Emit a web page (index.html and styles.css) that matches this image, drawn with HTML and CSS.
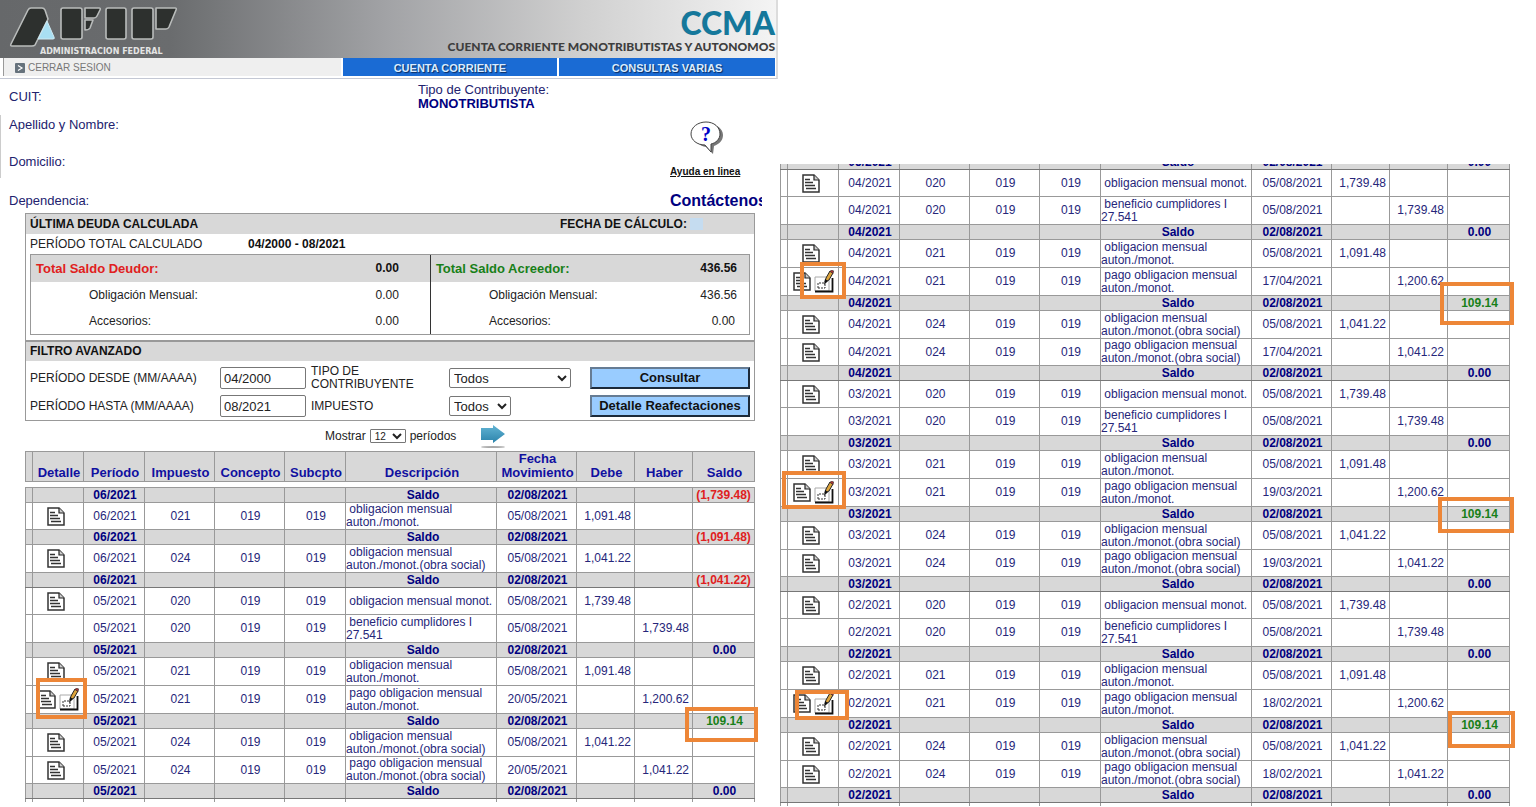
FILE: index.html
```html
<!DOCTYPE html>
<html lang="es">
<head>
<meta charset="utf-8">
<title>CCMA - Cuenta Corriente Monotributistas y Autónomos</title>
<link rel="stylesheet" href="styles.css">
</head>
<body>
<svg class="sprite" aria-hidden="true">
  <symbol id="doc" viewBox="0 0 18 19">
    <path d="M1 1h11l5 5v12H1z" fill="#fff" stroke="#333" stroke-width="1.5"/>
    <path d="M12 1v5h5" fill="#ccc" stroke="#222" stroke-width="1.2"/>
    <path d="M3 5.500h5M3 8.500h8M3 11.500h10M4 14.500h10" stroke="#333" stroke-width="1.3" fill="none"/>
  </symbol>
  <symbol id="edit" viewBox="0 0 20 24">
    <path d="M1 7h14v14H1z" fill="#fff" stroke="#aaa"/>
    <path d="M1 21.500h17.5V8" fill="none" stroke="#111" stroke-width="1.8"/>
    <path d="M4 18v-5h6M4 18h7v-4" fill="none" stroke="#333" stroke-dasharray="2 1"/>
    <path d="M11 12l1-4 4-7 3 2-4 7z" fill="#dda43c" stroke="#222"/>
    <path d="M16 1.500l3 2 .8-2.500L17.500 0z" fill="#a33" stroke="#333" stroke-width=".6"/>
    <path d="M10 15l1-6 3 2z" fill="#111"/>
  </symbol>
</svg>
<div class="page">
<main class="panel">
  <header class="banner">
    <div class="brand">
      <svg class="logo" viewBox="0 0 170 42" role="img" aria-label="AFIP">
        <g fill="#2d302e" stroke="#b9bcbb" stroke-width="1.600" stroke-linejoin="round">
          <path d="M22 2h11q2 0 3 2l3 9-13 26q-1 1-3 1H3q-2 0-1-2L19 4q1-2 3-2z"/>
          <rect x="52" y="2" width="21" height="31" rx="2"/>
          <path d="M76 2h14q2 0 1 2l-3 6q-1 2-3 2h-9z"/>
          <path d="M76 14h8l-3 8q-1 2-5 2z"/>
          <rect x="97" y="2" width="20" height="31" rx="2"/>
          <rect x="123" y="2" width="21" height="31" rx="2"/>
          <path d="M147 2h19q2 0 1 2l-7 17q-1 2-3 2h-10z"/>
        </g>
        <path d="M38 15l-9 18h15q2 0 1-2z" fill="#a9dff2" stroke="#cfe9f2"/>
      </svg>
      <span class="brand-sub">ADMINISTRACION FEDERAL</span>
    </div>
    <div class="titles">
      <h1>CCMA</h1>
      <p>CUENTA CORRIENTE MONOTRIBUTISTAS Y AUTONOMOS</p>
    </div>
  </header>
  <nav class="nav">
    <a class="logout" href="#"><svg viewBox="0 0 10 10" aria-hidden="true"><rect width="10" height="10" rx="1" fill="#66727c"/><path d="M3 2.500l4 2.500-4 2.500" fill="none" stroke="#fff" stroke-width="1.200"/></svg>CERRAR SESION</a>
    <a class="tab" href="#">CUENTA CORRIENTE</a>
    <a class="tab" href="#">CONSULTAS VARIAS</a>
  </nav>
  <section class="info">
    <div class="who">
      <p class="cuit">CUIT:</p>
      <div class="person">
        <p>Apellido y Nombre:</p>
        <p>Domicilio:</p>
      </div>
      <p>Dependencia:</p>
    </div>
    <p class="kind">Tipo de Contribuyente:<br><b>MONOTRIBUTISTA</b></p>
    <div class="help">
      <a class="help-link" href="#">
        <svg viewBox="0 0 34 34" aria-hidden="true">
          <path d="M19 3c8 0 14 5 14 11s-4 9-9 11l-1 8-7-7c-6-1-11-5-11-11S11 3 19 3z" fill="#777"/>
          <path d="M16 1c8 0 14 5 14 12 0 5-4 9-9 10v8l-6-7C7 24 1 19 1 13 1 6 8 1 16 1z" fill="#fff" stroke="#444"/>
          <text x="16" y="20" text-anchor="middle">?</text>
        </svg>
        <span>Ayuda en linea</span>
      </a>
      <a class="contact" href="#">Contáctenos</a>
    </div>
  </section>
  <div class="content">
    <form class="box">
      <div class="bar"><h2>ÚLTIMA DEUDA CALCULADA</h2><h2 class="calc">FECHA DE CÁLCULO:<i></i></h2></div>
      <p class="range">PERÍODO TOTAL CALCULADO<b>04/2000 - 08/2021</b></p>
      <div class="totals">
        <dl>
          <div class="sum debt"><dt>Total Saldo Deudor:</dt><dd>0.00</dd></div>
          <div><dt>Obligación Mensual:</dt><dd>0.00</dd></div>
          <div><dt>Accesorios:</dt><dd>0.00</dd></div>
        </dl>
        <dl>
          <div class="sum credit"><dt>Total Saldo Acreedor:</dt><dd>436.56</dd></div>
          <div><dt>Obligación Mensual:</dt><dd>436.56</dd></div>
          <div><dt>Accesorios:</dt><dd>0.00</dd></div>
        </dl>
      </div>
      <div class="bar filter-bar"><h2>FILTRO AVANZADO</h2></div>
      <div class="filters">
        <label for="desde">PERÍODO DESDE (MM/AAAA)</label>
        <input id="desde" type="text" value="04/2000">
        <label for="tipo">TIPO DE CONTRIBUYENTE</label>
        <select id="tipo" class="wide"><option>Todos</option></select>
        <button type="button">Consultar</button>
        <label for="hasta">PERÍODO HASTA (MM/AAAA)</label>
        <input id="hasta" type="text" value="08/2021">
        <label for="impuesto">IMPUESTO</label>
        <select id="impuesto"><option>Todos</option></select>
        <button type="button">Detalle Reafectaciones</button>
      </div>
    </form>
    <div class="pager">
      <label for="cant">Mostrar</label>
      <select id="cant"><option>12</option></select>
      <span>períodos</span>
      <a href="#" aria-label="Siguiente"><svg viewBox="0 0 26 24" aria-hidden="true">
        <defs><linearGradient id="sky" x1="0" y1="0" x2="0" y2="1"><stop offset="0" stop-color="#62b4d4"/><stop offset="1" stop-color="#2c83ab"/></linearGradient></defs>
        <path d="M1 4h12V1l12 9-12 9v-3H1z" fill="url(#sky)"/>
        <ellipse cx="13" cy="23" rx="12" ry="1" fill="#aaa"/>
      </svg></a>
    </div>
    <table class="moves">
      <colgroup><col class="c-edge"><col class="c-icon"><col class="c-per"><col class="c-imp"><col class="c-con"><col class="c-sub"><col class="c-des"><col class="c-fec"><col class="c-deb"><col class="c-hab"><col class="c-sal"></colgroup>
      <thead>
        <tr><th><th>Detalle<th>Período<th>Impuesto<th>Concepto<th>Subcpto<th>Descripción<th>Fecha Movimiento<th>Debe<th>Haber<th>Saldo</tr>
      </thead>
      <tbody>
        <tr class="gap"><td colspan="11"></tr>
        <tr class="total"><td><td><td>06/2021<td><td><td><td>Saldo<td>02/08/2021<td><td><td class="neg">(1,739.48)</tr>
        <tr class="short"><td><td><svg class="ic"><use href="#doc"/></svg><td>06/2021<td>021<td>019<td>019<td>&nbsp;obligacion mensual<br>auton./monot.<td>05/08/2021<td>1,091.48<td><td></tr>
        <tr class="total"><td><td><td>06/2021<td><td><td><td>Saldo<td>02/08/2021<td><td><td class="neg">(1,091.48)</tr>
        <tr><td><td><svg class="ic"><use href="#doc"/></svg><td>06/2021<td>024<td>019<td>019<td>&nbsp;obligacion mensual<br>auton./monot.(obra social)<td>05/08/2021<td>1,041.22<td><td></tr>
        <tr class="total last"><td><td><td>06/2021<td><td><td><td>Saldo<td>02/08/2021<td><td><td class="neg">(1,041.22)</tr>
        <tr class="short"><td><td><svg class="ic"><use href="#doc"/></svg><td>05/2021<td>020<td>019<td>019<td>&nbsp;obligacion mensual monot.<td>05/08/2021<td>1,739.48<td><td></tr>
        <tr><td><td><td>05/2021<td>020<td>019<td>019<td>&nbsp;beneficio cumplidores I<br>27.541<td>05/08/2021<td><td>1,739.48<td></tr>
        <tr class="total"><td><td><td>05/2021<td><td><td><td>Saldo<td>02/08/2021<td><td><td>0.00</tr>
        <tr><td><td><svg class="ic"><use href="#doc"/></svg><td>05/2021<td>021<td>019<td>019<td>&nbsp;obligacion mensual<br>auton./monot.<td>05/08/2021<td>1,091.48<td><td></tr>
        <tr><td><td class="pair"><svg class="ic"><use href="#doc"/></svg><svg class="ed"><use href="#edit"/></svg><span class="mark i1"></span><td>05/2021<td>021<td>019<td>019<td>&nbsp;pago obligacion mensual<br>auton./monot.<td>20/05/2021<td><td>1,200.62<td></tr>
        <tr class="total"><td><td><td>05/2021<td><td><td><td>Saldo<td>02/08/2021<td><td><td class="pos">109.14<span class="mark v1"></span></tr>
        <tr><td><td><svg class="ic"><use href="#doc"/></svg><td>05/2021<td>024<td>019<td>019<td>&nbsp;obligacion mensual<br>auton./monot.(obra social)<td>05/08/2021<td>1,041.22<td><td></tr>
        <tr class="short"><td><td><svg class="ic"><use href="#doc"/></svg><td>05/2021<td>024<td>019<td>019<td>&nbsp;pago obligacion mensual<br>auton./monot.(obra social)<td>20/05/2021<td><td>1,041.22<td></tr>
        <tr class="total last"><td><td><td>05/2021<td><td><td><td>Saldo<td>02/08/2021<td><td><td>0.00</tr>
        <tr class="tail"><td><td><td><td><td><td><td><td><td><td><td></tr>
      </tbody>
    </table>
  </div>
</main>
<section class="more" aria-label="Movimientos anteriores">
    <table class="moves">
      <colgroup><col class="c-edge"><col class="c-icon"><col class="c-per"><col class="c-imp"><col class="c-con"><col class="c-sub"><col class="c-des"><col class="c-fec"><col class="c-deb"><col class="c-hab"><col class="c-sal"></colgroup>
      <tbody>
        <tr class="total last"><td><td><td>05/2021<td><td><td><td>Saldo<td>02/08/2021<td><td><td>0.00</tr>
        <tr class="short"><td><td><svg class="ic"><use href="#doc"/></svg><td>04/2021<td>020<td>019<td>019<td>&nbsp;obligacion mensual monot.<td>05/08/2021<td>1,739.48<td><td></tr>
        <tr><td><td><td>04/2021<td>020<td>019<td>019<td>&nbsp;beneficio cumplidores I<br>27.541<td>05/08/2021<td><td>1,739.48<td></tr>
        <tr class="total"><td><td><td>04/2021<td><td><td><td>Saldo<td>02/08/2021<td><td><td>0.00</tr>
        <tr><td><td><svg class="ic"><use href="#doc"/></svg><td>04/2021<td>021<td>019<td>019<td>&nbsp;obligacion mensual<br>auton./monot.<td>05/08/2021<td>1,091.48<td><td></tr>
        <tr><td><td class="pair"><svg class="ic"><use href="#doc"/></svg><svg class="ed"><use href="#edit"/></svg><span class="mark i2"></span><td>04/2021<td>021<td>019<td>019<td>&nbsp;pago obligacion mensual<br>auton./monot.<td>17/04/2021<td><td>1,200.62<td></tr>
        <tr class="total"><td><td><td>04/2021<td><td><td><td>Saldo<td>02/08/2021<td><td><td class="pos">109.14<span class="mark v2"></span></tr>
        <tr><td><td><svg class="ic"><use href="#doc"/></svg><td>04/2021<td>024<td>019<td>019<td>&nbsp;obligacion mensual<br>auton./monot.(obra social)<td>05/08/2021<td>1,041.22<td><td></tr>
        <tr class="short"><td><td><svg class="ic"><use href="#doc"/></svg><td>04/2021<td>024<td>019<td>019<td>&nbsp;pago obligacion mensual<br>auton./monot.(obra social)<td>17/04/2021<td><td>1,041.22<td></tr>
        <tr class="total last"><td><td><td>04/2021<td><td><td><td>Saldo<td>02/08/2021<td><td><td>0.00</tr>
        <tr class="short"><td><td><svg class="ic"><use href="#doc"/></svg><td>03/2021<td>020<td>019<td>019<td>&nbsp;obligacion mensual monot.<td>05/08/2021<td>1,739.48<td><td></tr>
        <tr><td><td><td>03/2021<td>020<td>019<td>019<td>&nbsp;beneficio cumplidores I<br>27.541<td>05/08/2021<td><td>1,739.48<td></tr>
        <tr class="total"><td><td><td>03/2021<td><td><td><td>Saldo<td>02/08/2021<td><td><td>0.00</tr>
        <tr><td><td><svg class="ic"><use href="#doc"/></svg><td>03/2021<td>021<td>019<td>019<td>&nbsp;obligacion mensual<br>auton./monot.<td>05/08/2021<td>1,091.48<td><td></tr>
        <tr><td><td class="pair"><svg class="ic"><use href="#doc"/></svg><svg class="ed"><use href="#edit"/></svg><span class="mark i3"></span><td>03/2021<td>021<td>019<td>019<td>&nbsp;pago obligacion mensual<br>auton./monot.<td>19/03/2021<td><td>1,200.62<td></tr>
        <tr class="total"><td><td><td>03/2021<td><td><td><td>Saldo<td>02/08/2021<td><td><td class="pos">109.14<span class="mark v3"></span></tr>
        <tr><td><td><svg class="ic"><use href="#doc"/></svg><td>03/2021<td>024<td>019<td>019<td>&nbsp;obligacion mensual<br>auton./monot.(obra social)<td>05/08/2021<td>1,041.22<td><td></tr>
        <tr class="short"><td><td><svg class="ic"><use href="#doc"/></svg><td>03/2021<td>024<td>019<td>019<td>&nbsp;pago obligacion mensual<br>auton./monot.(obra social)<td>19/03/2021<td><td>1,041.22<td></tr>
        <tr class="total last"><td><td><td>03/2021<td><td><td><td>Saldo<td>02/08/2021<td><td><td>0.00</tr>
        <tr class="short"><td><td><svg class="ic"><use href="#doc"/></svg><td>02/2021<td>020<td>019<td>019<td>&nbsp;obligacion mensual monot.<td>05/08/2021<td>1,739.48<td><td></tr>
        <tr><td><td><td>02/2021<td>020<td>019<td>019<td>&nbsp;beneficio cumplidores I<br>27.541<td>05/08/2021<td><td>1,739.48<td></tr>
        <tr class="total"><td><td><td>02/2021<td><td><td><td>Saldo<td>02/08/2021<td><td><td>0.00</tr>
        <tr><td><td><svg class="ic"><use href="#doc"/></svg><td>02/2021<td>021<td>019<td>019<td>&nbsp;obligacion mensual<br>auton./monot.<td>05/08/2021<td>1,091.48<td><td></tr>
        <tr><td><td class="pair"><svg class="ic"><use href="#doc"/></svg><svg class="ed"><use href="#edit"/></svg><span class="mark i4"></span><td>02/2021<td>021<td>019<td>019<td>&nbsp;pago obligacion mensual<br>auton./monot.<td>18/02/2021<td><td>1,200.62<td></tr>
        <tr class="total"><td><td><td>02/2021<td><td><td><td>Saldo<td>02/08/2021<td><td><td class="pos">109.14<span class="mark v4"></span></tr>
        <tr><td><td><svg class="ic"><use href="#doc"/></svg><td>02/2021<td>024<td>019<td>019<td>&nbsp;obligacion mensual<br>auton./monot.(obra social)<td>05/08/2021<td>1,041.22<td><td></tr>
        <tr class="short"><td><td><svg class="ic"><use href="#doc"/></svg><td>02/2021<td>024<td>019<td>019<td>&nbsp;pago obligacion mensual<br>auton./monot.(obra social)<td>18/02/2021<td><td>1,041.22<td></tr>
        <tr class="total last"><td><td><td>02/2021<td><td><td><td>Saldo<td>02/08/2021<td><td><td>0.00</tr>
        <tr class="tail"><td><td><td><td><td><td><td><td><td><td><td></tr>
      </tbody>
    </table>
</section>
</div>
</body>
</html>
```

FILE: styles.css
```css
* { box-sizing: border-box; }
body, h1, h2, p, dl, dd { margin: 0; }
body { background: #fff; font: 13px/16px "Liberation Sans", Arial, sans-serif; color: #222; }
a { color: inherit; text-decoration: none; }
.sprite { display: none; }

.page { display: grid; grid-template-columns: 778fr 758fr; height: 100vh; overflow: hidden; }

/* Banner */
.banner { display: flex; justify-content: space-between; height: 58px; padding: 6px 1px 0 9px; border-right: 2px solid #dcdcdc; background: linear-gradient(90deg, #66686a 0%, #6a6c6e 22%, #a2a3a6 50%, #d0d0d0 75%, #f4f4f4 100%); }
.brand { display: flex; flex-direction: column; }
.logo { width: 170px; height: 42px; }
.brand-sub { padding-left: 31px; font: bold 8px/7px "DejaVu Sans", sans-serif; color: #e4e4e4; }
.titles { display: flex; flex-direction: column; align-items: flex-end; font-family: Lato, sans-serif; font-weight: 900; }
h1 { font-size: 32px; line-height: 33px; font-weight: 900; color: #15789b; }
.titles p { font-size: 12px; line-height: 16px; color: #3e3e3e; }

/* Navigation */
.nav { display: grid; grid-template-columns: 338fr 215fr 216fr; column-gap: 2px; height: 21px; padding: 0 1px 2px 3px; border-bottom: 1px solid #c4c8d4; border-right: 2px solid #dcdcdc; }
.nav a { display: flex; align-items: center; padding-top: 2px; }
.nav .logout { gap: 3px; padding-left: 11px; border-left: 1px solid #999; background: #efefef; font-size: 10px; color: #777; }
.logout svg { width: 10px; height: 10px; }
.tab { justify-content: center; background: #1a6bd4; font-size: 11px; font-weight: bold; color: #d9ecff; text-shadow: 1px 1px 1px #0a2c60; }

/* Taxpayer data */
.info { display: grid; grid-template-columns: 409fr 252fr 92fr; height: 134px; padding: 0 16px 0 9px; color: #22226e; }
.who { margin-left: -9px; }
.who p { padding-left: 9px; }
.who .cuit { padding-top: 10px; }
.person { display: grid; align-content: start; gap: 21px; height: 63px; margin: 10px 0 15px; padding-top: 2px; border-left: 1px solid #ccc; }
.person p { padding-left: 8px; }
.kind { padding-top: 4px; line-height: 14px; }
.kind b { color: #00007f; }
.help { display: flex; flex-direction: column; justify-content: space-between; padding: 42px 0 2px; overflow: hidden; }
.help-link { display: flex; flex-direction: column; gap: 9px; font-size: 10px; font-weight: bold; color: #111; text-decoration: underline; }
.help-link svg { width: 34px; height: 34px; margin-left: 20px; }
.help-link text { font: bold 20px "Liberation Serif", serif; fill: #0000c8; }
.contact { font-size: 16px; line-height: 20px; font-weight: bold; color: #00007f; }

/* Debt summary and filter */
.content { padding: 0 23px 0 25px; }
.box { border: 1px solid #999; }
.bar { display: flex; justify-content: space-between; height: 20px; padding: 0 4px; background: #d8d8d8; }
h2 { font-size: 12px; line-height: 20px; color: #111; }
.calc { display: flex; align-items: center; gap: 3px; width: 190px; }
.calc i { width: 13px; height: 12px; background: #c5dcf0; }
.range { display: grid; grid-template-columns: 218px 1fr; padding: 0 4px; font-size: 12px; line-height: 20px; }
.range b { color: #111; }
.totals { display: grid; grid-template-columns: 400fr 320fr; margin: 0 4px 5px; border: 1px solid #999; }
.totals dl + dl { border-left: 1px solid #333; }
.totals dl div { display: flex; justify-content: space-between; padding: 0 31px 0 58px; font-size: 12px; line-height: 26px; }
.totals dl + dl div { padding-right: 12px; }
.totals dl + dl div + div + div { padding-right: 14px; }
.totals dl .sum { padding-left: 5px; background: #d8d8d8; font-weight: bold; color: #111; line-height: 27px; }
.sum dt { font-size: 13px; }
.debt dt { color: #e02020; }
.credit dt { color: #188018; }
.filter-bar { height: 21px; border-top: 2px solid #999; }
.filter-bar h2 { line-height: 19px; }
.filters { display: grid; grid-template-columns: 190px 86px 143px 1fr 160px; align-items: center; row-gap: 4px; padding: 4px 4px 3px; font-size: 12px; line-height: 13px; }
.filters label { padding-right: 20px; white-space: nowrap; }
.filters label[for="tipo"] { white-space: normal; }
.filters input + label { padding-left: 5px; }
.filters select { justify-self: start; width: 62px; height: 20px; }
.filters select.wide { width: 122px; }
input { width: 86px; height: 22px; padding: 1px 3px; border: 1px solid #777; border-radius: 2px; font: 13px "Liberation Sans", Arial, sans-serif; color: #222; background: #fff; }
select { border: 1px solid #777; border-radius: 2px; padding: 0; font: 13px "Liberation Sans", Arial, sans-serif; color: #222; background: #fff; }
button { height: 22px; padding: 0; border: 2px solid; border-color: #667c94 #1c2a3a #1c2a3a #667c94; background: #99ccff; font: bold 13px/16px "Liberation Sans", Arial, sans-serif; color: #111; }

.pager { display: flex; align-items: center; gap: 4px; height: 30px; padding-left: 300px; font-size: 12px; }
.pager select { width: 36px; height: 14px; font-size: 10px; border-radius: 1px; }
.pager a { margin-left: 20px; height: 24px; }
.pager svg { width: 26px; height: 24px; }

/* Movements */
.moves { width: 100%; table-layout: fixed; border-collapse: collapse; font-size: 12px; line-height: 13px; color: #26267a; }
.c-edge { width: 7px; }
.c-icon { width: 51px; }
.c-per, .c-sub { width: 61px; }
.c-imp, .c-con { width: 70px; }
.c-des { width: 151px; }
.c-fec { width: 80px; }
.c-deb, .c-hab { width: 58px; }
.c-sal { width: 62px; }
th, td { position: relative; padding: 0 0 0 2px; border: 1px solid #999; text-align: center; }
th { height: 30px; padding-bottom: 1px; vertical-align: bottom; background: #d8d8d8; font-size: 13px; line-height: 14px; color: #1010a0; }
td { height: 28px; }
td:nth-child(7) { padding-left: 0; text-align: left; white-space: nowrap; }
td:nth-child(9), td:nth-child(10) { padding-right: 3px; text-align: right; }
.short td { height: 27px; }
.total td { height: 15px; background: #d8d8d8; font-weight: bold; color: #000080; text-align: center; }
.total td:nth-child(7) { padding-left: 4px; }
.total.last td { border-bottom-color: #777; }
.total .neg { color: #e02020; padding: 0; }
.total .pos { color: #188018; }
.gap td { height: 6px; border-left: 0; border-right: 0; }
.tail td { height: 3px; border-bottom: 0; }
.ic { display: inline-block; width: 18px; height: 19px; vertical-align: middle; margin-right: 6px; }
.ed { width: 20px; height: 24px; vertical-align: middle; }
.pair { white-space: nowrap; padding: 0; line-height: 24px; }
.pair .ic { margin-right: 3px; }

/* Orange highlights around rectified payments and credit balances */
.mark { position: absolute; z-index: 1; border: 4px solid #ed8637; pointer-events: none; }
.i1 { inset: -8px -4px -6px 3px; }
.i2 { inset: -6px -8px -4px 12px; }
.i3 { inset: -8px -8px -3px -6px; }
.i4 { inset: 0 -11px -3px 7px; }
.v1 { inset: -7px -4px -14px -8px; }
.v2 { inset: -14px -5px -15px -8px; }
.v3 { inset: -10px -5px -12px -10px; }
.v4 { inset: -7px -6px -16px 0; }

.more { margin-top: 164px; padding: 0 26px 0 2px; overflow: hidden; }
.more .moves { margin-top: -10px; }
```
